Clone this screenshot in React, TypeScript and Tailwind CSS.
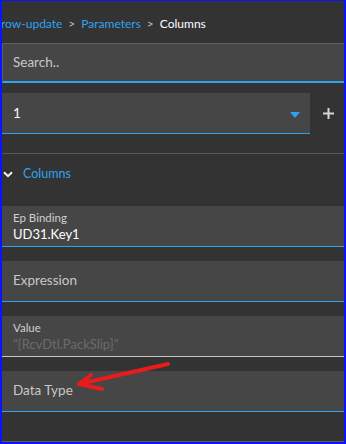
import React from "react";

const font = { fontFamily: "Lato, 'Noto Sans', sans-serif" };

const Field: React.FC<{
  label?: string;
  value?: string;
  placeholder?: string;
  dim?: boolean;
  line?: string;
}> = ({ label, value, placeholder, dim, line = "border-[#2ea3f2]" }) => (
  <div className={`h-[41px] bg-[#464646] border-b ${line} pl-[11px] flex flex-col justify-center`}>
    {placeholder ? (
      <span className="text-[13.5px] text-[#c8c8c8] leading-none">{placeholder}</span>
    ) : (
      <>
        <span className="text-[11.5px] text-[#cfcfcf] leading-[15px]">{label}</span>
        <span className={`text-[13px] leading-[18px] ${dim ? "text-[#6b6b6b]" : "text-white"}`}>{value}</span>
      </>
    )}
  </div>
);

export default function App() {
  return (
    <div
      className="relative w-[346px] h-[444px] overflow-hidden bg-[#333333] border-l-2 border-r-2 border-b-2 border-t border-[#0a14ff]"
      style={font}
    >
      <div className="h-[42px] pt-[3px] flex items-center text-[12px] -ml-[1px]">
        <span className="text-[#2ea3f2]">row-update</span>
        <span className="text-[#bdbdbd] mx-[6px]">&gt;</span>
        <span className="text-[#2ea3f2]">Parameters</span>
        <span className="text-[#bdbdbd] mx-[6px]">&gt;</span>
        <span className="text-white">Columns</span>
      </div>

      <div className="h-[40px] bg-[#464646] border-t border-l border-[#5e5e5e] border-b-2 border-b-[#2ea3f2] pl-[10px] flex items-center">
        <span className="text-[13.5px] text-[#c8c8c8]">Search..</span>
      </div>

      <div className="mt-[10px] flex items-center">
        <div className="w-[308px] h-[41px] bg-[#464646] border-b border-[#2ea3f2] pl-[11px] pr-[10px] flex items-center justify-between">
          <span className="text-[13.5px] text-white">1</span>
          <svg width="10" height="6" viewBox="0 0 10 6" className="mt-[3px]">
            <path d="M0 0h10L5 6z" fill="#2ea3f2" />
          </svg>
        </div>
        <svg width="11" height="11" viewBox="0 0 11 11" className="ml-[13px]">
          <path d="M5.5 0v11M0 5.5h11" stroke="#d6d6d6" strokeWidth="2" />
        </svg>
      </div>

      <div className="mt-[19px] h-px bg-[#595959]" />

      <div className="h-[36px] flex items-center mt-[2px]">
        <svg width="10" height="7" viewBox="0 0 10 7" className="ml-[1px] mr-[10px]">
          <path d="M1 1.2l4 4 4-4" stroke="#f0f0f0" strokeWidth="2" fill="none" />
        </svg>
        <span className="text-[12.5px] text-[#2ea3f2]">Columns</span>
      </div>

      <div className="mt-[14px] flex flex-col gap-[14px]">
        <Field label="Ep Binding" value="UD31.Key1" />
        <Field placeholder="Expression" />
        <Field label="Value" value={'"{RcvDtl.PackSlip}"'} dim line="border-[#c8c8c8]" />
        <Field placeholder="Data Type" />
      </div>

      <div className="mt-[29px] h-px bg-[#5a5a5a]" />

      <svg className="absolute left-0 top-0 pointer-events-none" width="346" height="444">
        <path
          d="M166 363 L77 383 M77 383 L89 374 M77 383 L100 388"
          stroke="#e81c1c"
          strokeWidth="4"
          strokeLinecap="round"
          strokeLinejoin="round"
          fill="none"
        />
      </svg>
    </div>
  );
}
